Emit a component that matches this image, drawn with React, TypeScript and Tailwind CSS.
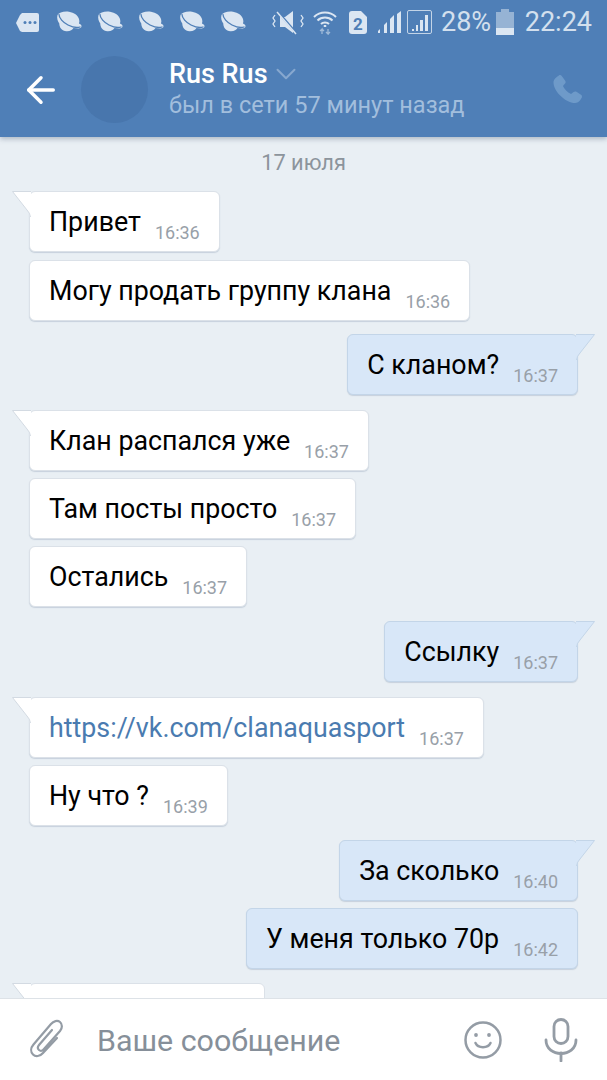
import { ArrowLeft, ChevronDown } from "lucide-react";

function Planet() {
    return (
        <svg width="27" height="22" viewBox="0 0 27 22" fill="none">
            <path d="M1.500 4C3 1.500 8 0 13 0.800c5 .8 9 3.700 10 7.200 .5 1.500 .5 3 0 4.500l2 1.300c1 1.500 .5 3-1.500 3.500-1.500.4-3.500.2-6-.3-1 1.800-3.500 3.500-7 3.300C6 20 3.200 16.500 3.300 12.500c-1.500-2-2.800-5.500-1.800-8.500z" fill="#dbe6f2" />
            <path d="M3 3.500c0 3.500 4 8 9 10.500 4 2 9 3 12 2" stroke="#4f7fb7" strokeWidth="1.300" strokeLinecap="round" />
        </svg>
    );
}

function StatusBar() {
    return (
        <div className="h-[44px] flex items-center pl-[16px] pr-[15px] text-[#d3e0ee]">
            <svg width="24" height="20" viewBox="0 0 24 20" className="mr-[16px]">
                <path d="M6 1h15a2 2 0 0 1 2 2v15a2 2 0 0 1-2 2H6l-2-1-4-8 4-8z" fill="#dbe6f2" />
                <circle cx="9" cy="10.500" r="1.500" fill="#4f7fb7" />
                <circle cx="14" cy="10.500" r="1.500" fill="#4f7fb7" />
                <circle cx="19" cy="10.500" r="1.500" fill="#4f7fb7" />
            </svg>
            <div className="flex gap-[14px]">
                <Planet />
                <Planet />
                <Planet />
                <Planet />
                <Planet />
            </div>
            <svg width="34" height="26" viewBox="0 0 34 26" fill="none" className="ml-[25px]">
                <path d="M8 8h5l8-6v22l-8-6H8z" fill="#dbe6f2" />
                <path d="M6 3l19 22" stroke="#4f7fb7" strokeWidth="2.500" />
                <path d="M5 3l19 22" stroke="#dbe6f2" strokeWidth="1.500" />
                <path d="M3 6l-2 3 2 3-2 3 2 3M29 6l2 3-2 3 2 3-2 3" stroke="#dbe6f2" strokeWidth="1.300" />
            </svg>
            <svg width="24" height="26" viewBox="0 0 24 26" fill="none" className="ml-[7px]">
                <path d="M1 8c6-6 16-6 22 0M4.500 11.500c4-4 11-4 15 0M8 15c2-2 6-2 8 0" stroke="#dbe6f2" strokeWidth="2" />
                <path d="M12 16v2" stroke="#dbe6f2" strokeWidth="2.500" />
                <path d="M9 25v-5l-2 2M9 20l2 2M15 20v5l-2-2M15 25l2-2" stroke="#9fbad8" strokeWidth="1.300" />
            </svg>
            <svg width="18" height="23" viewBox="0 0 18 23" className="ml-[12px]">
                <path d="M3 0h9l6 6v14a3 3 0 0 1-3 3H3a3 3 0 0 1-3-3V3a3 3 0 0 1 3-3z" fill="#dbe6f2" />
                <text x="9" y="18.500" textAnchor="middle" fontSize="17" fontWeight="700" fontFamily="Roboto, sans-serif" fill="#4f7fb7">2</text>
            </svg>
            <svg width="23" height="24" viewBox="0 0 23 24" className="ml-[11px]" fill="#dbe6f2">
                <path d="M0 23v-2l2-2v4z" />
                <path d="M6 23v-8l3-3v11z" />
                <path d="M12 23V9l4-4v18z" />
                <path d="M19 23V4l4-3v22z" />
            </svg>
            <div className="ml-[6px] w-[25px] h-[24px] border border-[#c3d4e7] rounded-[2px] flex items-end justify-center gap-[2px] pb-[2px]">
                <div className="w-[2px] h-[2px] bg-[#dbe6f2]" />
                <div className="w-[2px] h-[6px] bg-[#dbe6f2]" />
                <div className="w-[3px] h-[11px] bg-[#dbe6f2]" />
                <div className="w-[3px] h-[16px] bg-[#dbe6f2]" />
            </div>
            <span className="ml-[9px] text-[27px] leading-none">28%</span>
            <div className="ml-[5px] flex flex-col items-center">
                <div className="w-[8px] h-[3px] bg-[#96b3d4]" />
                <div className="w-[18px] h-[23px] bg-[#96b3d4] flex flex-col justify-end">
                    <div className="h-[7px] bg-[#dbe6f2]" />
                </div>
            </div>
            <span className="ml-auto text-[27px] leading-none">22:24</span>
        </div>
    );
}

function Header() {
    return (
        <header className="h-[137px] bg-[#4f7fb7] shrink-0 relative z-10 shadow-[0_2px_5px_rgba(60,80,110,0.35)]">
            <StatusBar />
            <div className="h-[93px] flex items-center pl-[20px] pr-[22px] pb-[2px]">
                <ArrowLeft size={42} strokeWidth={2} color="#ffffff" />
                <div className="ml-[19px] w-[67px] h-[67px] rounded-full bg-[#4876ad]" />
                <div className="ml-[21px] flex-1 flex flex-col">
                    <div className="flex items-center gap-[1px] h-[31px]">
                        <span className="text-[27px] leading-[31px] font-medium text-white">Rus Rus</span>
                        <ChevronDown size={34} strokeWidth={1.400} color="#87a8cf" />
                    </div>
                    <span className="text-[23.500px] leading-[31px] text-[#a2bedd]">был в сети 57 минут назад</span>
                </div>
                <svg width="36" height="36" viewBox="0 0 24 24" fill="#6e9ac9">
                    <path d="M6.600 2.300c.6-.4 1.400-.3 1.900.3l2.300 3.200c.4.600.4 1.400-.1 1.900L9.300 9.300c.9 2 2.900 4.200 5.400 5.400l1.700-1.400c.5-.4 1.300-.5 1.900-.1l3 2c.7.400.9 1.300.5 2-.8 1.500-2.300 3.500-4.300 3.500-3.500 0-7.500-2.300-10.200-5.200C4.500 12.700 2.800 9.200 3 6.500c.1-1.500 2-3.200 3.600-4.200z" />
                </svg>
            </div>
        </header>
    );
}

function Message({
    text,
    time,
    out,
    tail,
    link,
}: {
    text: string;
    time: string;
    out?: boolean;
    tail?: boolean;
    link?: boolean;
}) {
    return (
        <div
            className={
                out
                    ? "relative self-end h-[61px] flex items-center gap-[14px] px-[19px] rounded-[6px] border border-[#c3d5e8] bg-[#d8e7f8] shadow-[0_1px_1px_rgba(120,140,165,0.3)]"
                    : "relative self-start h-[61px] flex items-center gap-[14px] px-[19px] rounded-[6px] border border-[#dbe1e8] bg-white shadow-[0_1px_1px_rgba(120,140,165,0.3)]"
            }
        >
            {tail && !out && (
                <svg width="19" height="26" viewBox="0 0 19 26" className="absolute left-[-18px] top-[-1px]">
                    <path d="M0.500 0.500L15 19Q18 22 18 26H19V0.500z" fill="#ffffff" />
                    <path d="M18.500 26Q18 22 15 19L0.500 0.500H19" fill="none" stroke="#d3dae2" />
                </svg>
            )}
            {tail && out && (
                <svg width="19" height="26" viewBox="0 0 19 26" className="absolute right-[-18px] top-[-1px]">
                    <path d="M18.500 0.500L4 19Q1 22 1 26H0V0.500z" fill="#d8e7f8" />
                    <path d="M0.500 26Q1 22 4 19L18.500 0.500H0" fill="none" stroke="#c3d5e8" />
                </svg>
            )}
            <span className={link ? "text-[26.800px] leading-[30px] text-[#4a7bb0]" : "text-[26.800px] leading-[30px] text-black"}>{text}</span>
            <span className="text-[18px] leading-[22px] pt-[22px] text-[#98a0a8]">{time}</span>
        </div>
    );
}

function Chat() {
    return (
        <main className="flex-1 min-h-0 overflow-hidden bg-[#e9eff4] flex flex-col pl-[29px] pr-[29px] pt-[14px]">
            <div className="text-center text-[21.800px] leading-[24px] text-[#8c949c] mb-[16px]">17 июля</div>
            <div className="flex flex-col gap-[8px]">
                <Message text="Привет" time="16:36" tail />
                <Message text="Могу продать группу клана" time="16:36" />
            </div>
            <div className="mt-[13px] flex flex-col">
                <Message text="С кланом?" time="16:37" out tail />
            </div>
            <div className="mt-[15px] flex flex-col gap-[7px]">
                <Message text="Клан распался уже" time="16:37" tail />
                <Message text="Там посты просто" time="16:37" />
                <Message text="Остались" time="16:37" />
            </div>
            <div className="mt-[14px] flex flex-col">
                <Message text="Ссылку" time="16:37" out tail />
            </div>
            <div className="mt-[15px] flex flex-col gap-[7px]">
                <Message text="https://vk.com/clanaquasport" time="16:37" tail link />
                <Message text="Ну что ?" time="16:39" />
            </div>
            <div className="mt-[14px] flex flex-col gap-[7px]">
                <Message text="За сколько" time="16:40" out tail />
                <Message text="У меня только 70р" time="16:42" out />
            </div>
            <div className="mt-[14px] relative self-start shrink-0 w-[236px] h-[61px] rounded-[6px] border border-[#dbe1e8] bg-white">
                <svg width="19" height="26" viewBox="0 0 19 26" className="absolute left-[-18px] top-[-1px]">
                    <path d="M0.500 0.500L15 19Q18 22 18 26H19V0.500z" fill="#ffffff" />
                    <path d="M18.500 26Q18 22 15 19L0.500 0.500H19" fill="none" stroke="#d3dae2" />
                </svg>
            </div>
        </main>
    );
}

function InputBar() {
    return (
        <footer className="h-[82px] shrink-0 bg-white border-t border-[#dde2e7] flex items-center pl-[29px] pr-[29px] relative z-10">
            <svg width="38" height="42" viewBox="0 0 38 42" fill="none" stroke="#949ca5" strokeWidth="2.200" strokeLinecap="round" className="mb-[2px]">
                <path d="M28 20L14 35c-3 3.500-7.500 4-10 1.500S1.500 30 4.500 26.500L22 6c2.500-3 6.500-4 9-2s2.500 6 0 9L15 31c-1.500 2-3.500 2.300-5 1s-1.300-3.500.2-5.300L23 12" />
            </svg>
            <span className="ml-[30px] flex-1 text-[30.400px] leading-none text-[#868f99] pt-[3px]">Ваше сообщение</span>
            <svg width="40" height="40" viewBox="0 0 40 40" fill="none" stroke="#949ca5" strokeWidth="2.500" strokeLinecap="round">
                <circle cx="20" cy="20" r="17.500" />
                <path d="M12.500 23c2.500 5.500 12.500 5.500 15 0" />
                <circle cx="13" cy="15" r="1.900" fill="#949ca5" stroke="none" />
                <circle cx="26" cy="15" r="1.900" fill="#949ca5" stroke="none" />
            </svg>
            <svg width="34" height="44" viewBox="0 0 34 44" fill="none" stroke="#949ca5" strokeWidth="2.800" strokeLinecap="round" className="ml-[41px]">
                <rect x="10" y="1.500" width="14" height="24" rx="7" />
                <path d="M2 22c0 18 30 18 30 0" />
                <path d="M17 35v8" />
            </svg>
        </footer>
    );
}

export default function App() {
    return (
        <div className="w-[607px] h-[1080px] flex flex-col overflow-hidden font-['Roboto',sans-serif]">
            <Header />
            <Chat />
            <InputBar />
        </div>
    );
}
